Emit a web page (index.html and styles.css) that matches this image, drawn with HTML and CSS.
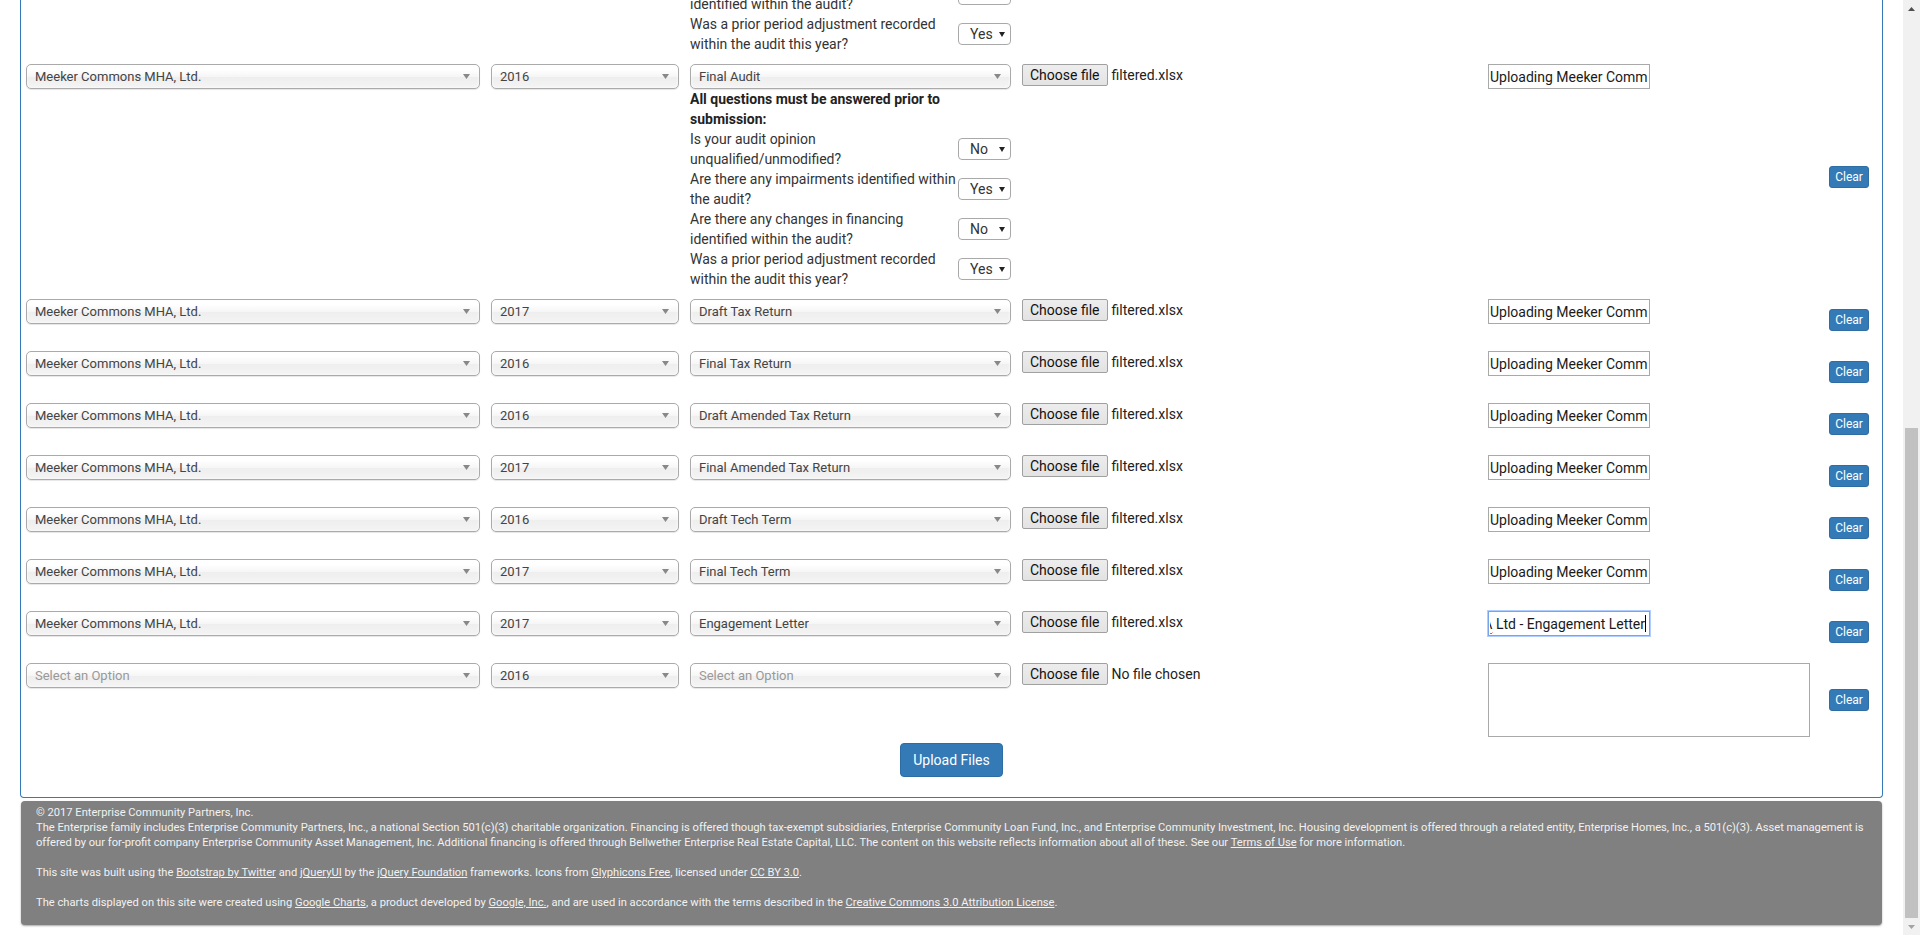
FILE: index.html
```html
<!DOCTYPE html>
<html lang="en">
<head>
<meta charset="utf-8">
<title>Document Upload</title>
<link rel="stylesheet" href="styles.css">
</head>
<body>
<div class="page">
  <div class="panel">

    <!-- tail of the previous audit row (the rest is scrolled out of view) -->
    <div class="row">
      <div class="doc-cell col-doc">
        <div class="q"><div class="q-label">Are there any changes in financing<br>identified within the audit?</div><div class="yn"><span>No</span><svg class="yarr" width="6" height="6" viewBox="0 0 6 6"><path d="M0 1h6L3 6z"/></svg></div></div>
        <div class="q"><div class="q-label">Was a prior period adjustment recorded<br>within the audit this year?</div><div class="yn"><span>Yes</span><svg class="yarr" width="6" height="6" viewBox="0 0 6 6"><path d="M0 1h6L3 6z"/></svg></div></div>
      </div>
    </div>

    <!-- Final Audit -->
    <div class="row">
      <div class="chosen"><span>Meeker Commons MHA, Ltd.</span><svg class="carr" width="7" height="5" viewBox="0 0 7 5"><path d="M0 0h7L3.5 5z"/></svg></div>
      <div class="chosen"><span>2016</span><svg class="carr" width="7" height="5" viewBox="0 0 7 5"><path d="M0 0h7L3.5 5z"/></svg></div>
      <div class="doc-cell">
        <div class="chosen"><span>Final Audit</span><svg class="carr" width="7" height="5" viewBox="0 0 7 5"><path d="M0 0h7L3.5 5z"/></svg></div>
        <div class="notice">All questions must be answered prior to<br>submission:</div>
        <div class="q"><div class="q-label">Is your audit opinion<br>unqualified/unmodified?</div><div class="yn"><span>No</span><svg class="yarr" width="6" height="6" viewBox="0 0 6 6"><path d="M0 1h6L3 6z"/></svg></div></div>
        <div class="q"><div class="q-label">Are there any impairments identified within<br>the audit?</div><div class="yn"><span>Yes</span><svg class="yarr" width="6" height="6" viewBox="0 0 6 6"><path d="M0 1h6L3 6z"/></svg></div></div>
        <div class="q"><div class="q-label">Are there any changes in financing<br>identified within the audit?</div><div class="yn"><span>No</span><svg class="yarr" width="6" height="6" viewBox="0 0 6 6"><path d="M0 1h6L3 6z"/></svg></div></div>
        <div class="q"><div class="q-label">Was a prior period adjustment recorded<br>within the audit this year?</div><div class="yn"><span>Yes</span><svg class="yarr" width="6" height="6" viewBox="0 0 6 6"><path d="M0 1h6L3 6z"/></svg></div></div>
      </div>
      <div class="file"><span class="choose">Choose file</span><span class="fname">filtered.xlsx</span></div>
      <input class="tinput" type="text" readonly value="Uploading Meeker Commons MHA Ltd - Final Audit">
      <button class="clear">Clear</button>
    </div>

    <div class="row">
      <div class="chosen"><span>Meeker Commons MHA, Ltd.</span><svg class="carr" width="7" height="5" viewBox="0 0 7 5"><path d="M0 0h7L3.5 5z"/></svg></div>
      <div class="chosen"><span>2017</span><svg class="carr" width="7" height="5" viewBox="0 0 7 5"><path d="M0 0h7L3.5 5z"/></svg></div>
      <div class="chosen"><span>Draft Tax Return</span><svg class="carr" width="7" height="5" viewBox="0 0 7 5"><path d="M0 0h7L3.5 5z"/></svg></div>
      <div class="file"><span class="choose">Choose file</span><span class="fname">filtered.xlsx</span></div>
      <input class="tinput" type="text" readonly value="Uploading Meeker Commons MHA Ltd - Draft Tax Return">
      <button class="clear">Clear</button>
    </div>

    <div class="row">
      <div class="chosen"><span>Meeker Commons MHA, Ltd.</span><svg class="carr" width="7" height="5" viewBox="0 0 7 5"><path d="M0 0h7L3.5 5z"/></svg></div>
      <div class="chosen"><span>2016</span><svg class="carr" width="7" height="5" viewBox="0 0 7 5"><path d="M0 0h7L3.5 5z"/></svg></div>
      <div class="chosen"><span>Final Tax Return</span><svg class="carr" width="7" height="5" viewBox="0 0 7 5"><path d="M0 0h7L3.5 5z"/></svg></div>
      <div class="file"><span class="choose">Choose file</span><span class="fname">filtered.xlsx</span></div>
      <input class="tinput" type="text" readonly value="Uploading Meeker Commons MHA Ltd - Final Tax Return">
      <button class="clear">Clear</button>
    </div>

    <div class="row">
      <div class="chosen"><span>Meeker Commons MHA, Ltd.</span><svg class="carr" width="7" height="5" viewBox="0 0 7 5"><path d="M0 0h7L3.5 5z"/></svg></div>
      <div class="chosen"><span>2016</span><svg class="carr" width="7" height="5" viewBox="0 0 7 5"><path d="M0 0h7L3.5 5z"/></svg></div>
      <div class="chosen"><span>Draft Amended Tax Return</span><svg class="carr" width="7" height="5" viewBox="0 0 7 5"><path d="M0 0h7L3.5 5z"/></svg></div>
      <div class="file"><span class="choose">Choose file</span><span class="fname">filtered.xlsx</span></div>
      <input class="tinput" type="text" readonly value="Uploading Meeker Commons MHA Ltd - Draft Amended Tax Return">
      <button class="clear">Clear</button>
    </div>

    <div class="row">
      <div class="chosen"><span>Meeker Commons MHA, Ltd.</span><svg class="carr" width="7" height="5" viewBox="0 0 7 5"><path d="M0 0h7L3.5 5z"/></svg></div>
      <div class="chosen"><span>2017</span><svg class="carr" width="7" height="5" viewBox="0 0 7 5"><path d="M0 0h7L3.5 5z"/></svg></div>
      <div class="chosen"><span>Final Amended Tax Return</span><svg class="carr" width="7" height="5" viewBox="0 0 7 5"><path d="M0 0h7L3.5 5z"/></svg></div>
      <div class="file"><span class="choose">Choose file</span><span class="fname">filtered.xlsx</span></div>
      <input class="tinput" type="text" readonly value="Uploading Meeker Commons MHA Ltd - Final Amended Tax Return">
      <button class="clear">Clear</button>
    </div>

    <div class="row">
      <div class="chosen"><span>Meeker Commons MHA, Ltd.</span><svg class="carr" width="7" height="5" viewBox="0 0 7 5"><path d="M0 0h7L3.5 5z"/></svg></div>
      <div class="chosen"><span>2016</span><svg class="carr" width="7" height="5" viewBox="0 0 7 5"><path d="M0 0h7L3.5 5z"/></svg></div>
      <div class="chosen"><span>Draft Tech Term</span><svg class="carr" width="7" height="5" viewBox="0 0 7 5"><path d="M0 0h7L3.5 5z"/></svg></div>
      <div class="file"><span class="choose">Choose file</span><span class="fname">filtered.xlsx</span></div>
      <input class="tinput" type="text" readonly value="Uploading Meeker Commons MHA Ltd - Draft Tech Term">
      <button class="clear">Clear</button>
    </div>

    <div class="row">
      <div class="chosen"><span>Meeker Commons MHA, Ltd.</span><svg class="carr" width="7" height="5" viewBox="0 0 7 5"><path d="M0 0h7L3.5 5z"/></svg></div>
      <div class="chosen"><span>2017</span><svg class="carr" width="7" height="5" viewBox="0 0 7 5"><path d="M0 0h7L3.5 5z"/></svg></div>
      <div class="chosen"><span>Final Tech Term</span><svg class="carr" width="7" height="5" viewBox="0 0 7 5"><path d="M0 0h7L3.5 5z"/></svg></div>
      <div class="file"><span class="choose">Choose file</span><span class="fname">filtered.xlsx</span></div>
      <input class="tinput" type="text" readonly value="Uploading Meeker Commons MHA Ltd - Final Tech Term">
      <button class="clear">Clear</button>
    </div>

    <div class="row">
      <div class="chosen"><span>Meeker Commons MHA, Ltd.</span><svg class="carr" width="7" height="5" viewBox="0 0 7 5"><path d="M0 0h7L3.5 5z"/></svg></div>
      <div class="chosen"><span>2017</span><svg class="carr" width="7" height="5" viewBox="0 0 7 5"><path d="M0 0h7L3.5 5z"/></svg></div>
      <div class="chosen"><span>Engagement Letter</span><svg class="carr" width="7" height="5" viewBox="0 0 7 5"><path d="M0 0h7L3.5 5z"/></svg></div>
      <div class="file"><span class="choose">Choose file</span><span class="fname">filtered.xlsx</span></div>
      <div class="tinput focus"><span class="tval end"><span class="ltr">Uploading Meeker Commons <span class="misspelt">MHA</span> Ltd - Engagement Letter</span></span><span class="caret"></span></div>
      <button class="clear">Clear</button>
    </div>

    <div class="row">
      <div class="chosen placeholder"><span>Select an Option</span><svg class="carr" width="7" height="5" viewBox="0 0 7 5"><path d="M0 0h7L3.5 5z"/></svg></div>
      <div class="chosen"><span>2016</span><svg class="carr" width="7" height="5" viewBox="0 0 7 5"><path d="M0 0h7L3.5 5z"/></svg></div>
      <div class="chosen placeholder"><span>Select an Option</span><svg class="carr" width="7" height="5" viewBox="0 0 7 5"><path d="M0 0h7L3.5 5z"/></svg></div>
      <div class="file"><span class="choose">Choose file</span><span class="fname">No file chosen</span></div>
      <textarea class="tarea" readonly></textarea>
      <button class="clear">Clear</button>
    </div>

    <div class="actions">
      <button class="btn-upload">Upload Files</button>
    </div>
  </div>

  <footer class="footer">
    <p>&copy; 2017 Enterprise Community Partners, Inc.<br>The Enterprise family includes Enterprise Community Partners, Inc., a national Section 501(c)(3) charitable organization. Financing is offered though tax-exempt subsidiaries, Enterprise Community Loan Fund, Inc., and Enterprise Community Investment, Inc. Housing development is offered through a related entity, Enterprise Homes, Inc., a 501(c)(3). Asset management is<br>offered by our for-profit company Enterprise Community Asset Management, Inc. Additional financing is offered through Bellwether Enterprise Real Estate Capital, LLC. The content on this website reflects information about all of these. See our <a href="#">Terms of Use</a> for more information.</p>
    <p>This site was built using the <a href="#">Bootstrap by Twitter</a> and <a href="#">jQueryUI</a> by the <a href="#">jQuery Foundation</a> frameworks. Icons from <a href="#">Glyphicons Free</a>, licensed under <a href="#">CC BY 3.0</a>.</p>
    <p>The charts displayed on this site were created using <a href="#">Google Charts</a>, a product developed by <a href="#">Google, Inc.</a>, and are used in accordance with the terms described in the <a href="#">Creative Commons 3.0 Attribution License</a>.</p>
  </footer>
</div>

<div class="scrollbar">
  <div class="sb-btn"><svg width="7" height="4" viewBox="0 0 7 4"><path d="M0 4h7L3.5 0z" fill="#505050"/></svg></div>
  <div class="sb-track"><div class="sb-thumb"></div></div>
  <div class="sb-btn"><svg width="7" height="4" viewBox="0 0 7 4"><path d="M0 0h7L3.5 4z" fill="#a3a3a3"/></svg></div>
</div>
</body>
</html>
```

FILE: styles.css
```css
* { box-sizing: border-box; }

html, body {
  margin: 0;
  padding: 0;
}

body {
  display: flex;
  height: 935px;
  overflow: hidden;
  background: #fff;
  color: #333;
  font-family: Roboto, "Liberation Sans", Arial, sans-serif;
  font-size: 14px;
  line-height: 20px;
}

.page {
  flex: 1;
  min-width: 0;
  overflow: hidden;
}

/* page is scrolled: the panel's top lies above the viewport */
.panel {
  margin: -31px 20px 0;
  border: 1px solid #337ab7;
  border-top: 0;
  border-radius: 0 0 4px 4px;
}

.row {
  display: grid;
  grid-template-columns: 454px 188px 321px 455px 322px 1fr;
  column-gap: 11px;
  align-items: start;
  min-height: 52px;
  padding: 5px;
}

.col-doc { grid-column: 3; }

/* chosen-style single select */
.chosen {
  display: flex;
  align-items: center;
  justify-content: space-between;
  height: 25px;
  padding: 0 9px 0 8px;
  border: 1px solid #aaa;
  border-radius: 5px;
  background: linear-gradient(#fff 20%, #f6f6f6 50%, #eee 52%, #f4f4f4 100%);
  box-shadow: inset 0 0 3px #fff, 0 1px 1px rgba(0, 0, 0, 0.1);
  color: #444;
  font-size: 13px;
  line-height: 23px;
  white-space: nowrap;
}

.chosen.placeholder span { color: #999; }

.carr { flex: none; fill: #888; }

.doc-cell {
  display: flex;
  flex-direction: column;
}

.notice {
  font-weight: 700;
  color: #222;
  width: 268px;
}

.q {
  display: grid;
  grid-template-columns: 268px 53px;
  align-items: center;
  min-height: 40px;
}

.q-label { white-space: nowrap; }

.yn {
  display: flex;
  align-items: center;
  justify-content: space-between;
  height: 22px;
  padding: 0 5px 0 11px;
  border: 1px solid #a9a9a9;
  border-radius: 4px;
  background: #fff;
  color: #333;
  line-height: 20px;
}

.yarr { flex: none; fill: #222; }

/* file input replica */
.file {
  display: flex;
  align-items: center;
  gap: 4px;
  height: 22px;
  color: #222;
  white-space: nowrap;
}

.choose {
  display: flex;
  align-items: center;
  height: 22px;
  padding: 0 7px;
  border: 1px solid #a0a0a0;
  border-radius: 2px;
  background: linear-gradient(#ededed, #e3e3e3);
  color: #111;
}

/* text inputs */
.tinput {
  display: flex;
  align-items: center;
  width: 162px;
  height: 25px;
  margin: 0;
  padding: 0 1px;
  border: 1px solid #a9a9a9;
  border-radius: 0;
  overflow: hidden;
  white-space: nowrap;
  background: #fff;
  color: #1a1a1a;
  font-family: inherit;
  font-size: 14px;
  line-height: 20px;
  outline: none;
}

.tval {
  display: block;
  flex: 1 1 auto;
  min-width: 0;
  overflow: hidden;
  white-space: nowrap;
}

.tval.end { direction: rtl; }

.ltr {
  direction: ltr;
  unicode-bidi: isolate;
}

.tinput.focus {
  padding-right: 3px;
  border-color: #77a4ea;
  box-shadow: 0 0 0 1px rgba(77, 144, 254, 0.45);
}

.misspelt {
  text-decoration: underline wavy #e02020;
  text-decoration-thickness: 1px;
}

.caret {
  flex: none;
  width: 1px;
  height: 17px;
  background: #000;
}

.tarea {
  display: block;
  width: 322px;
  height: 74px;
  margin: 0;
  padding: 2px;
  border: 1px solid #a9a9a9;
  border-radius: 0;
  background: #fff;
  resize: none;
  font-family: inherit;
  font-size: 14px;
  outline: none;
}

.clear {
  justify-self: center;
  align-self: center;
  height: 22px;
  padding: 0 5px;
  border: 1px solid #2e6da4;
  border-radius: 3px;
  background: #337ab7;
  color: #fff;
  font-family: inherit;
  font-size: 12px;
  line-height: 18px;
}

.actions {
  display: flex;
  justify-content: center;
  padding: 1px 0 20px;
}

.btn-upload {
  height: 34px;
  padding: 6px 12px;
  border: 1px solid #2e6da4;
  border-radius: 4px;
  background: #337ab7;
  color: #fff;
  font-family: inherit;
  font-size: 14px;
  line-height: 20px;
}

.footer {
  margin: 3px 21px 0;
  padding: 4px 5px 15px 15px;
  border-radius: 4px;
  background: #808080;
  box-shadow: 0 1px 2px rgba(0, 0, 0, 0.35);
  color: #f2f2f2;
  font-size: 11.15px;
  line-height: 15px;
}

.footer p { margin: 0; }
.footer p + p { margin-top: 15px; }

.footer a {
  color: inherit;
  text-decoration: underline;
}

/* scrollbar replica */
.scrollbar {
  flex: none;
  display: flex;
  flex-direction: column;
  width: 17px;
  height: 935px;
  background: #f1f1f1;
}

.sb-btn {
  display: flex;
  align-items: center;
  justify-content: center;
  height: 17px;
  flex: none;
}

.sb-track {
  flex: 1;
  display: flex;
  flex-direction: column;
  justify-content: flex-end;
}

.sb-thumb {
  height: 490px;
  margin: 0 2px;
  background: #c1c1c1;
}
```
